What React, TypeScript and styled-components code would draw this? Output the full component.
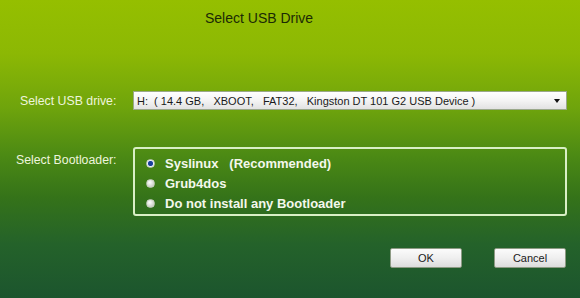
import React, { useState } from 'react';
import styled, { createGlobalStyle } from 'styled-components';

const GlobalStyle = createGlobalStyle`
  html, body {
    margin: 0;
    padding: 0;
  }
  body {
    font-family: "Liberation Sans", Arial, sans-serif;
  }
`;

const Dialog = styled.div`
  width: 580px;
  height: 298px;
  box-sizing: border-box;
  display: flex;
  flex-direction: column;
  background: linear-gradient(
    180deg,
    #95bf00 0%,
    #8cb804 18%,
    #6fa40c 36%,
    #4c8a14 52%,
    #357319 66%,
    #24622a 82%,
    #1c552e 100%
  );
  overflow: hidden;
`;

const Title = styled.div`
  margin-top: 10px;
  padding-left: 205px;
  font-size: 14px;
  color: #1b2a05;
  line-height: 16px;
`;

const Row = styled.div<{ $top: number; $align?: string }>`
  display: grid;
  grid-template-columns: 133px 434px;
  align-items: ${p => p.$align || 'center'};
  margin-top: ${p => p.$top}px;
`;

const Label = styled.label<{ $indent: number; $offset?: number }>`
  padding-left: ${p => p.$indent}px;
  padding-top: ${p => p.$offset || 0}px;
  font-size: 12.3px;
  color: #eef5dc;
  white-space: nowrap;
`;

const Select = styled.div`
  height: 19px;
  box-sizing: border-box;
  display: flex;
  align-items: center;
  justify-content: space-between;
  padding: 0 6px 0 3px;
  border: 1px solid #9aa88a;
  background: linear-gradient(180deg, #ffffff 0%, #f4f4f4 50%, #e2e2e2 100%);
  font-size: 11px;
  color: #1a1a1a;
  white-space: pre;
`;

const Arrow = styled.span`
  width: 0;
  height: 0;
  border-left: 3.5px solid transparent;
  border-right: 3.5px solid transparent;
  border-top: 4px solid #111;
`;

const GroupBox = styled.div`
  height: 69px;
  box-sizing: border-box;
  border: 2px solid #d9efc6;
  border-radius: 3px;
  padding: 6px 0 0 11px;
  display: flex;
  flex-direction: column;
  gap: 4px;
`;

const Option = styled.label`
  display: flex;
  align-items: center;
  gap: 10px;
  height: 16px;
  font-size: 13px;
  font-weight: bold;
  color: #f4f8ec;
  white-space: pre;
  cursor: pointer;
`;

const Radio = styled.span<{ $checked: boolean }>`
  width: 9px;
  height: 9px;
  border-radius: 50%;
  box-sizing: border-box;
  background: ${p =>
    p.$checked
      ? 'radial-gradient(circle, #1c3f9a 0 2px, #4a6fc4 2.5px, #eef2f8 3px)'
      : 'radial-gradient(circle at 40% 35%, #ffffff 0, #d4d8d0 60%, #b8bcb4 100%)'};
  border: 1px solid #c8d0c0;
`;

const Buttons = styled.div`
  display: flex;
  justify-content: flex-end;
  gap: 32px;
  padding-right: 14px;
  margin-top: 32px;
`;

const Button = styled.button`
  width: 72px;
  height: 20px;
  box-sizing: border-box;
  padding: 0;
  border: 1px solid #8d9a84;
  border-radius: 2px;
  background: linear-gradient(180deg, #fbfbfb 0%, #efefef 50%, #dcdcdc 100%);
  font-family: "Liberation Sans", Arial, sans-serif;
  font-size: 11px;
  color: #1a1a1a;
  cursor: pointer;
`;

const options = [
  'Syslinux   (Recommended)',
  'Grub4dos',
  'Do not install any Bootloader',
];

export default function App() {
  const [selected, setSelected] = useState(0);

  return (
    <>
      <GlobalStyle />
      <Dialog>
        <Title>Select USB Drive</Title>

        <Row $top={65}>
          <Label $indent={20}>Select USB drive:</Label>
          <Select>
            <span>H:  ( 14.4 GB,   XBOOT,   FAT32,   Kingston DT 101 G2 USB Device )</span>
            <Arrow />
          </Select>
        </Row>

        <Row $top={37} $align="start">
          <Label $indent={16} $offset={6}>Select Bootloader:</Label>
          <GroupBox>
            {options.map((text, i) => (
              <Option key={text} onClick={() => setSelected(i)}>
                <Radio $checked={selected === i} />
                {text}
              </Option>
            ))}
          </GroupBox>
        </Row>

        <Buttons>
          <Button>OK</Button>
          <Button>Cancel</Button>
        </Buttons>
      </Dialog>
    </>
  );
}
